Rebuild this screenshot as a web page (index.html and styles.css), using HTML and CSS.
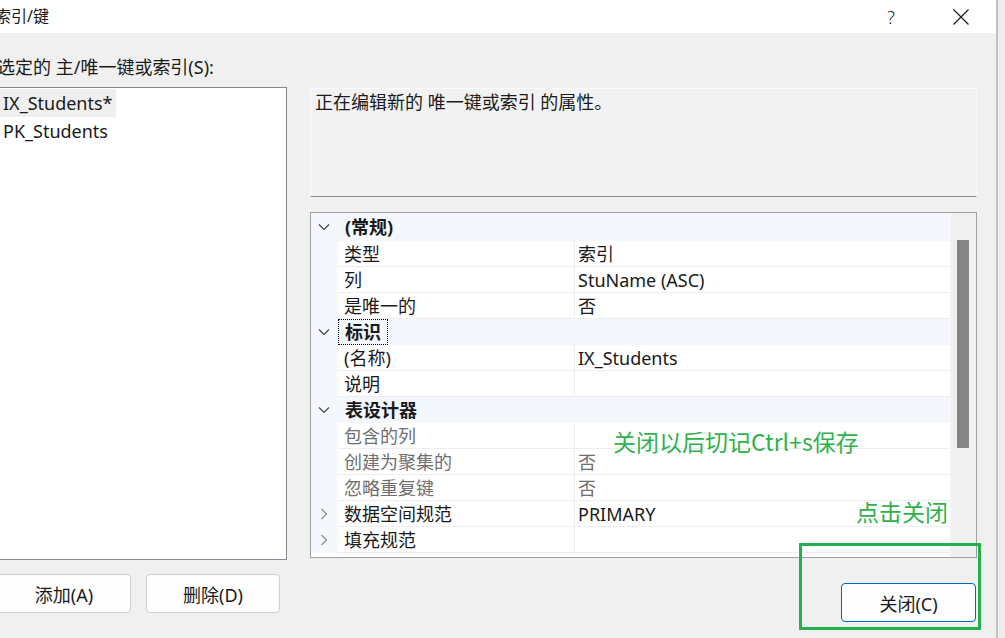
FILE: index.html
```html
<!DOCTYPE html>
<html lang="zh-CN">
<head>
<meta charset="utf-8">
<title>索引/键</title>
<link rel="stylesheet" href="styles.css">
</head>
<body>
<div class="screen">
  <div class="dialog">
    <div class="titlebar">
      <div class="title">索引/键</div>
      <div class="tb-btn help">?</div>
      <div class="tb-btn close">
        <svg width="18" height="18" viewBox="0 0 18 18"><path d="M1.5 1.5 L16.5 16.5 M16.5 1.5 L1.5 16.5" stroke="#1a1a1a" stroke-width="1.2" fill="none"/></svg>
      </div>
    </div>
    <div class="content">
      <div class="left">
        <div class="label">选定的 主/唯一键或索引(S):</div>
        <div class="listbox">
          <div class="item sel"><span>IX_Students*</span></div>
          <div class="item"><span>PK_Students</span></div>
        </div>
        <div class="btnrow">
          <div class="btn">添加(A)</div>
          <div class="btn">删除(D)</div>
        </div>
      </div>
      <div class="right">
        <div class="desc">正在编辑新的 唯一键或索引 的属性。</div>
        <div class="grid">
          <div class="rows">
            <div class="row cat first">
              <div class="gutter"><svg width="12" height="8" viewBox="0 0 12 8"><path d="M1 1.5 L6 6.5 L11 1.5" stroke="#444" stroke-width="1.2" fill="none"/></svg></div>
              <div class="cname">(常规)</div>
            </div>
            <div class="row"><div class="gutter"></div><div class="name">类型</div><div class="val">索引</div></div>
            <div class="row"><div class="gutter"></div><div class="name">列</div><div class="val">StuName (ASC)</div></div>
            <div class="row"><div class="gutter"></div><div class="name">是唯一的</div><div class="val">否</div></div>
            <div class="row cat">
              <div class="gutter"><svg width="12" height="8" viewBox="0 0 12 8"><path d="M1 1.5 L6 6.5 L11 1.5" stroke="#444" stroke-width="1.2" fill="none"/></svg></div>
              <div class="cname"><span class="focus">标识</span></div>
            </div>
            <div class="row"><div class="gutter"></div><div class="name">(名称)</div><div class="val">IX_Students</div></div>
            <div class="row"><div class="gutter"></div><div class="name">说明</div><div class="val"></div></div>
            <div class="row cat">
              <div class="gutter"><svg width="12" height="8" viewBox="0 0 12 8"><path d="M1 1.5 L6 6.5 L11 1.5" stroke="#444" stroke-width="1.2" fill="none"/></svg></div>
              <div class="cname">表设计器</div>
            </div>
            <div class="row dis"><div class="gutter"></div><div class="name">包含的列</div><div class="val"></div></div>
            <div class="row dis"><div class="gutter"></div><div class="name">创建为聚集的</div><div class="val">否</div></div>
            <div class="row dis"><div class="gutter"></div><div class="name">忽略重复键</div><div class="val">否</div></div>
            <div class="row">
              <div class="gutter"><svg width="8" height="12" viewBox="0 0 8 12"><path d="M1.5 1 L6.5 6 L1.5 11" stroke="#8a8a8a" stroke-width="1.2" fill="none"/></svg></div>
              <div class="name">数据空间规范</div><div class="val">PRIMARY</div>
            </div>
            <div class="row">
              <div class="gutter"><svg width="8" height="12" viewBox="0 0 8 12"><path d="M1.5 1 L6.5 6 L1.5 11" stroke="#8a8a8a" stroke-width="1.2" fill="none"/></svg></div>
              <div class="name">填充规范</div><div class="val"></div>
            </div>
          </div>
          <div class="scroll"><div class="thumb"></div></div>
        </div>
        <div class="footer">
          <div class="btn primary">关闭(C)</div>
        </div>
      </div>
    </div>
  </div>
  <div class="edge"></div>
</div>
<div class="note note1">关闭以后切记Ctrl+s保存</div>
<div class="note note2">点击关闭</div>
<div class="mark"></div>
</body>
</html>
```

FILE: styles.css
```css
* { box-sizing: border-box; }
html, body { margin: 0; padding: 0; }
body {
  width: 1005px;
  height: 638px;
  overflow: hidden;
  background: #f0f0f0;
  font-family: "Noto Sans", "Noto Sans CJK SC", sans-serif;
  color: #1a1a1a;
  position: relative;
}
.screen { display: flex; height: 638px; }
.dialog {
  margin-left: -20px;
  width: 1016px;
  flex: none;
  display: flex;
  flex-direction: column;
  background: #f0f0f0;
}
.edge {
  flex: 1;
  border-left: 2px solid #c2c2c2;
  background: #ececec;
}
.titlebar {
  height: 33px;
  background: #ffffff;
  display: flex;
  align-items: center;
}
.title { flex: 1; padding-left: 15px; font-size: 16px; line-height: 33px; }
.tb-btn {
  width: 70px;
  height: 33px;
  display: flex;
  align-items: center;
  justify-content: center;
}
.help { font-size: 18px; font-weight: 300; color: #222; }
.content { display: flex; padding-left: 17px; }
.left { width: 290px; flex: none; }
.label { margin-top: 22px; height: 24px; line-height: 24px; font-size: 18px; white-space: nowrap; }
.listbox {
  margin-top: 8px;
  height: 473px;
  background: #ffffff;
  border: 1px solid #828790;
  padding: 1px 0 0 1px;
}
.item { height: 28px; display: flex; }
.item span { padding: 0 3px 0 4px; line-height: 28px; font-size: 18px; }
.item.sel span { background: #efefef; }
.btnrow { margin-top: 14px; display: flex; gap: 15px; }
.btn {
  width: 134px;
  height: 39px;
  border: 1px solid #d0d0d0;
  border-radius: 4px;
  background: #fdfdfd;
  display: flex;
  align-items: center;
  justify-content: center;
  font-size: 18px;
}
.right { margin-left: 23px; width: 667px; flex: none; }
.desc {
  margin-top: 55px;
  height: 109px;
  background: #f2f2f2;
  border: 1px solid #fbfbfb;
  border-bottom: 1px solid #8f8f8f;
  padding: 0 4px;
  font-size: 18px;
  line-height: 26px;
}
.grid {
  margin-top: 15px;
  height: 346px;
  border: 1px solid #a0a0a0;
  display: flex;
  background: #ffffff;
}
.rows { flex: 1; display: flex; flex-direction: column; }
.row { height: 26px; display: flex; font-size: 18px; line-height: 26px; }
.row.first { height: 28px; line-height: 28px; }
.gutter {
  width: 27px;
  flex: none;
  background: #f4f7fc;
  display: flex;
  align-items: center;
  justify-content: center;
  padding-right: 2px;
}
.cat { background: #f4f7fc; }
.cname { padding-left: 7px; font-weight: 700; flex: 1; }
.focus {
  display: inline-block;
  outline: 1px dotted #000;
  outline-offset: 0;
  height: 24px;
  line-height: 24px;
  margin-left: -6px;
  padding: 0 6px 0 6px;
  margin-top: 1px;
}
.name {
  width: 237px;
  flex: none;
  padding-left: 6px;
  border-bottom: 1px solid #eceef4;
  border-right: 1px solid #eceef4;
  white-space: nowrap;
}
.val { flex: 1; padding-left: 3px; border-bottom: 1px solid #eceef4; }
.dis .name, .dis .val { color: #6f6f6f; }
.scroll { width: 26px; flex: none; background: #f0f0f0; border-left: 1px solid #f7f7f7; }
.thumb { margin-left: 6px; margin-top: 27px; width: 12px; height: 208px; background: #858585; }
.footer { margin-top: 25px; display: flex; justify-content: flex-end; padding-right: 1px; }
.btn.primary {
  width: 135px;
  border: 1px solid #0067c0;
  box-shadow: inset 0 0 0 1px #fdfdfd;
}
.note {
  position: absolute;
  color: #2eb24b;
  font-size: 23px;
  line-height: 28px;
  font-family: "Noto Sans CJK SC", "Noto Sans", sans-serif;
  white-space: nowrap;
}
.note1 { left: 613px; top: 427px; }
.note2 { left: 856px; top: 497px; }
.mark {
  position: absolute;
  left: 799px;
  top: 543px;
  width: 182px;
  height: 87px;
  border: 3px solid #22b14c;
}
```
